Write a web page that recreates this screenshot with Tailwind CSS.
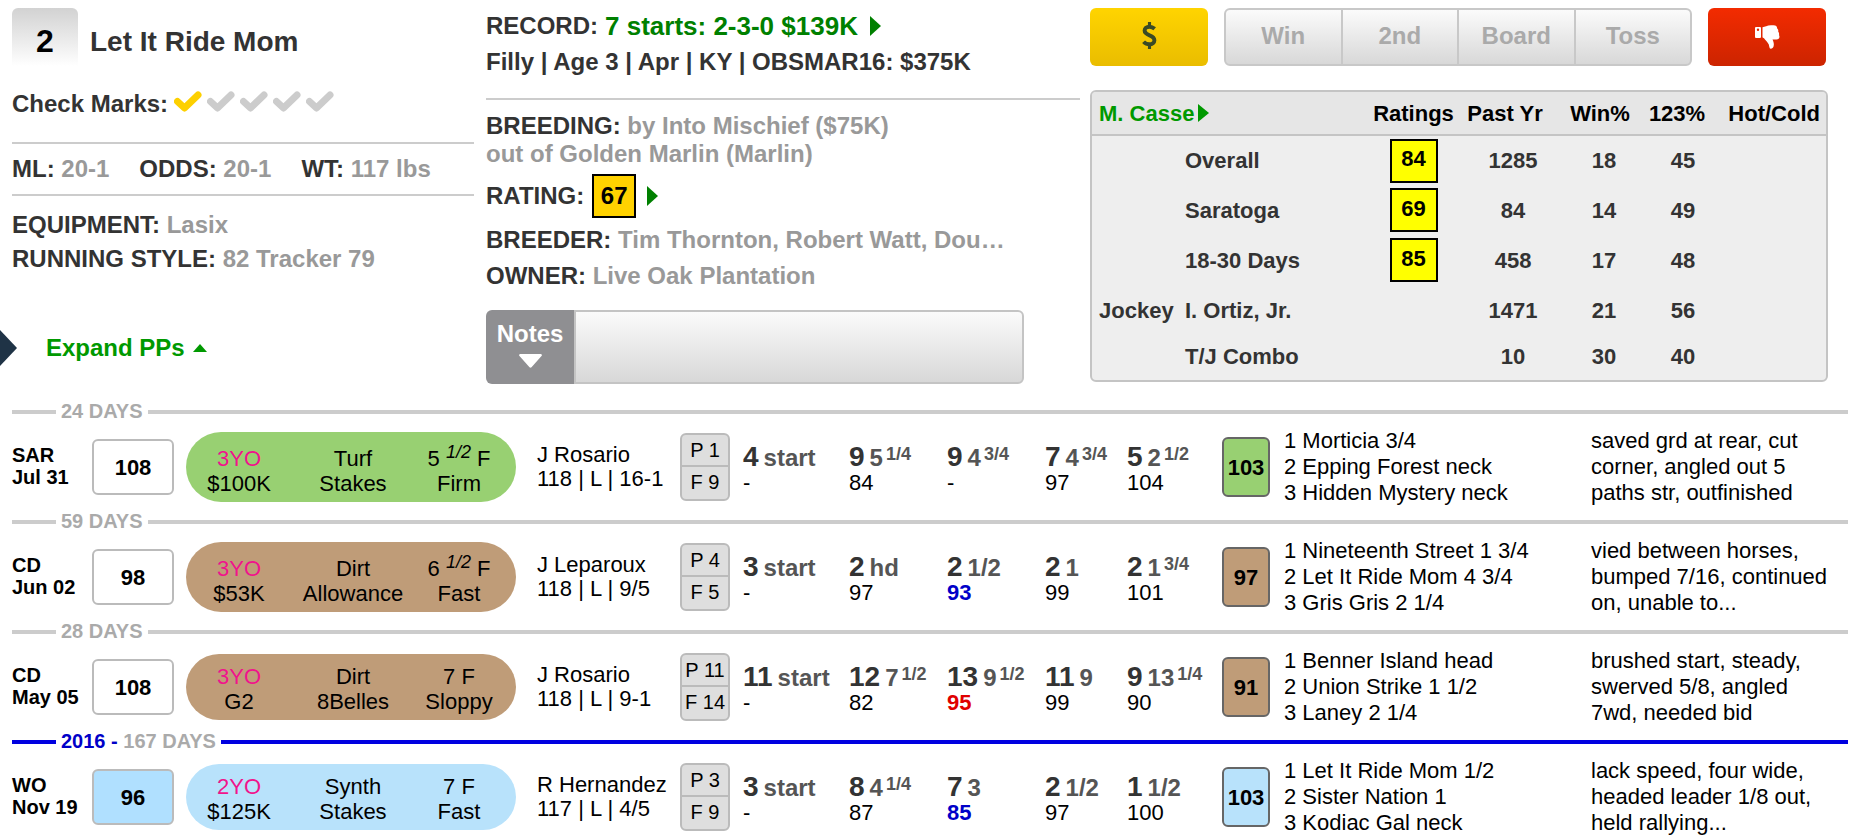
<!DOCTYPE html>
<html lang="en">
<head>
    <meta charset="UTF-8">
    <meta name="viewport" content="width=device-width, initial-scale=1.0">
    <title>Let It Ride Mom - Past Performances</title>
    <script src="https://cdn.jsdelivr.net/npm/@tailwindcss/browser@4"></script>
</head>
<body class="bg-white font-['Liberation_Sans',Arial,sans-serif] text-black">
    <main class="pr-2 pl-3">
        <div class="flex h-[400px] gap-3 pt-2 pr-1">

            <!-- Horse info -->
            <section class="min-w-0 flex-[462] text-2xl leading-7 font-bold text-[#333]">
                <div class="flex h-[58px] items-center gap-3">
                    <span class="flex h-full w-[66px] items-center justify-center rounded-t-md bg-linear-to-b from-[#d2d2d2] to-white pt-2 text-[32px] text-black">2</span>
                    <h1 class="pt-[10px] text-[28px]">Let It Ride Mom</h1>
                </div>
                <div class="mt-6 flex items-center gap-[6px] border-b-2 border-[#ccc] pb-6">
                    <span class="whitespace-nowrap">Check Marks:</span>
                    <div id="checks" class="flex gap-[5px] pb-1"></div>
                </div>
                <div class="flex h-[52px] items-center gap-[30px] border-b-2 border-[#ccc] whitespace-nowrap">
                    <span>ML: <span class="text-[#999]">20-1</span></span>
                    <span>ODDS: <span class="text-[#999]">20-1</span></span>
                    <span>WT: <span class="text-[#999]">117 lbs</span></span>
                </div>
                <div class="mt-3 leading-[34px]">
                    <p>EQUIPMENT: <span class="text-[#999]">Lasix</span></p>
                    <p>RUNNING STYLE: <span class="text-[#999]">82 Tracker 79</span></p>
                </div>
                <div class="relative mt-[58px] pl-[34px]">
                    <svg class="absolute -top-1 -left-3" width="17" height="36" viewBox="0 0 17 36"><path d="M0 0 L17 18 L0 36 Z" fill="#1f3346"/></svg>
                    <a href="#races" class="flex items-center gap-2 text-[#090]">Expand PPs
                        <svg width="14" height="8" viewBox="0 0 14 8"><path d="M0 8 L7 0 L14 8 Z" fill="currentColor"/></svg>
                    </a>
                </div>
            </section>

            <!-- Breeding and connections -->
            <section class="min-w-0 flex-[594] text-2xl leading-7 font-bold text-[#333]">
                <div class="h-[92px] border-b-2 border-[#ccc] leading-9 whitespace-nowrap">
                    <p class="flex items-center">RECORD:
                        <a href="#record" class="ml-[7px] flex items-center gap-3 text-[26px] text-[green]">7 starts: 2-3-0 $139K
                            <svg width="11" height="20" viewBox="0 0 11 20"><path d="M0 0 L11 10 L0 20 Z" fill="currentColor"/></svg>
                        </a>
                    </p>
                    <p>Filly | Age 3 | Apr | KY | OBSMAR16: $375K</p>
                </div>
                <p class="mt-3">BREEDING: <span class="text-[#999]">by Into Mischief ($75K)<br>out of Golden Marlin (Marlin)</span></p>
                <div class="mt-[6px] flex h-11 items-center">RATING:
                    <span class="ml-2 flex h-11 w-11 items-center justify-center border-2 border-black bg-[#ffd200] text-black">67</span>
                    <a href="#rating" aria-label="Rating details" class="ml-[11px] text-[green]">
                        <svg width="11" height="20" viewBox="0 0 11 20"><path d="M0 0 L11 10 L0 20 Z" fill="currentColor"/></svg>
                    </a>
                </div>
                <div class="mt-1 leading-9">
                    <p class="truncate">BREEDER: <span class="text-[#999]">Tim Thornton, Robert Watt, Dou…</span></p>
                    <p>OWNER: <span class="text-[#999]">Live Oak Plantation</span></p>
                </div>
                <div class="mt-4 flex h-[74px] w-[538px] max-w-full">
                    <button class="flex w-[88px] flex-col items-center rounded-l-md bg-[#8f8f92] pt-[10px] text-white">
                        Notes
                        <svg class="mt-[6px]" width="23" height="14" viewBox="0 0 23 14"><path d="M1 0 H22 Q23.500 1 22.500 2 L12.500 13.300 Q11.500 14 10.500 13.300 L.5 2 Q-.5 1 1 0 Z" fill="currentColor"/></svg>
                    </button>
                    <textarea aria-label="Notes" class="min-w-0 flex-1 resize-none rounded-r-md border-2 border-[#c4c4c4] bg-linear-to-b from-[#fbfbfb] to-[#d8d8d8]"></textarea>
                </div>
            </section>

            <!-- Bet buttons and trainer / jockey stats -->
            <section class="-ml-[2px] min-w-0 flex-[738] pr-4 text-[22px] font-bold text-[#333]">
                <div class="flex h-[58px] gap-4 pr-[2px]">
                    <button aria-label="Bet" class="flex w-[118px] items-center justify-center rounded-md bg-linear-to-b from-[#ffd400] to-[#eabd00] pb-1">
                        <svg width="15" height="27" viewBox="0 0 14 26" fill="none" stroke="#3a4a26" stroke-width="3.800"><path d="M12 6.500 C10 4.800 8.500 4.500 7 4.500 C4 4.500 2.300 6 2.300 8.300 C2.300 11 4.500 11.900 7 12.800 C9.800 13.800 11.700 15 11.700 17.600 C11.700 20 9.700 21.500 7 21.500 C4.600 21.500 2.800 20.600 1.300 19"/><path d="M7 0 V4.500 M7 21.500 V26" stroke-width="3"/></svg>
                    </button>
                    <div class="flex flex-1 divide-x-2 divide-[#c8c8c8] rounded-md border-2 border-[#c8c8c8] bg-linear-to-b from-[#fbfbfb] to-[#d8d8d8] text-2xl text-[#aaa]">
                        <button class="flex-1 pb-[2px]">Win</button>
                        <button class="flex-1 pb-[2px]">2nd</button>
                        <button class="flex-1 pb-[2px]">Board</button>
                        <button class="flex-1 pb-[2px]">Toss</button>
                    </div>
                    <button aria-label="Toss horse" class="flex w-[118px] items-center justify-center rounded-md bg-linear-to-b from-[#f32b00] to-[#cc2400]">
                        <svg width="25" height="24" viewBox="0 0 25 24" fill="#fff"><path fill-rule="evenodd" d="M1 2 H5 Q6 2 6 3 V12 Q6 13 5 13 H1 Q0 13 0 12 V3 Q0 2 1 2 Z M3 3.500 A1.200 1.200 0 1 0 3 5.900 A1.200 1.200 0 1 0 3 3.500 Z"/><path d="M7.500 2.200 C10 2 12 .3 16 .3 H18.500 C21 .3 22 1.500 22.200 3.500 C23.200 4.300 23.500 5.500 23.200 6.800 C24.200 7.800 24.300 9 24 10 C25.200 12.500 24 14.500 21.500 14.500 H17.500 C18.200 16 19 18 18.800 20 C18.600 22.500 17.500 23.800 15.500 23.800 C14.300 23.500 14.200 21 13.800 19.500 C13 17.500 10.300 14.800 9 13.200 C8.500 12.800 7.500 12.800 7.500 12 Z"/></svg>
                    </button>
                </div>
                <div class="mt-6 overflow-hidden rounded-md border-2 border-[#c4c4c4] bg-[#eee] pb-[3px]">
                    <table class="w-full table-fixed text-center whitespace-nowrap">
                        <colgroup>
                            <col class="w-[93px]"><col class="w-[180px]"><col class="w-[97px]"><col class="w-[102px]"><col class="w-[80px]"><col class="w-[78px]"><col>
                        </colgroup>
                        <thead>
                            <tr class="h-[43px] border-b-2 border-[#c4c4c4] bg-[#e6e6e6] text-black">
                                <th colspan="2" class="pl-[7px] text-left">
                                    <a href="#trainer" class="flex items-center gap-1 text-[#090]">M. Casse
                                        <svg width="11" height="18" viewBox="0 0 11 18"><path d="M0 0 L11 9 L0 18 Z" fill="currentColor"/></svg>
                                    </a>
                                </th>
                                <th>Ratings</th>
                                <th class="pr-4">Past Yr</th>
                                <th class="pr-2">Win%</th>
                                <th class="pr-3">123%</th>
                                <th class="pr-[6px] text-right">Hot/Cold</th>
                            </tr>
                        </thead>
                        <tbody id="stats"></tbody>
                    </table>
                </div>
            </section>
        </div>

        <!-- Past performances -->
        <table id="races" class="w-full table-fixed text-left text-[22px] whitespace-nowrap">
            <colgroup>
                <col class="w-[80px]"><col class="w-[94px]"><col class="w-[351px]"><col class="w-[143px]"><col class="w-[63px]"><col class="w-[106px]"><col class="w-[98px]"><col class="w-[98px]"><col class="w-[82px]"><col class="w-[95px]"><col class="w-[62px]"><col class="w-[307px]"><col>
            </colgroup>
            <tbody id="raceRows"></tbody>
        </table>
    </main>

    <script>
        const connections = [
            ['', 'Overall', 84, 1285, 18, 45],
            ['', 'Saratoga', 69, 84, 14, 49],
            ['', '18-30 Days', 85, 458, 17, 48],
            ['Jockey', 'I. Ortiz, Jr.', null, 1471, 21, 56],
            ['', 'T/J Combo', null, 10, 30, 40]
        ];

        const surfaces = {
            turf: 'bg-[#98d072]',
            dirt: 'bg-[#bf9c78]',
            synth: 'bg-[#b8e2fb]'
        };

        // calls: [position, margin, fraction, speed, speed colour]
        const races = [
            {
                days: '24 DAYS', track: 'SAR', date: 'Jul 31', speed: 108, surface: 'turf',
                age: '3YO', purse: '$100K', course: 'Turf', type: 'Stakes', distance: '5', half: true, going: 'Firm',
                jockey: 'J Rosario', line: '118 | L | 16-1', post: 'P 1', field: 'F 9',
                calls: [[4, 'start', '', '-'], [9, '5', '1/4', 84], [9, '4', '3/4', '-'], [7, '4', '3/4', 97], [5, '2', '1/2', 104]],
                figure: 103,
                finish: ['1 Morticia 3/4', '2 Epping Forest neck', '3 Hidden Mystery neck'],
                comment: 'saved grd at rear, cut corner, angled out 5 paths str, outfinished'
            },
            {
                days: '59 DAYS', track: 'CD', date: 'Jun 02', speed: 98, surface: 'dirt',
                age: '3YO', purse: '$53K', course: 'Dirt', type: 'Allowance', distance: '6', half: true, going: 'Fast',
                jockey: 'J Leparoux', line: '118 | L | 9/5', post: 'P 4', field: 'F 5',
                calls: [[3, 'start', '', '-'], [2, 'hd', '', 97], [2, '1/2', '', 93, 'blue'], [2, '1', '', 99], [2, '1', '3/4', 101]],
                figure: 97,
                finish: ['1 Nineteenth Street 1 3/4', '2 Let It Ride Mom 4 3/4', '3 Gris Gris 2 1/4'],
                comment: 'vied between horses, bumped 7/16, continued on, unable to...'
            },
            {
                days: '28 DAYS', track: 'CD', date: 'May 05', speed: 108, surface: 'dirt',
                age: '3YO', purse: 'G2', course: 'Dirt', type: '8Belles', distance: '7', half: false, going: 'Sloppy',
                jockey: 'J Rosario', line: '118 | L | 9-1', post: 'P 11', field: 'F 14',
                calls: [[11, 'start', '', '-'], [12, '7', '1/2', 82], [13, '9', '1/2', 95, 'red'], [11, '9', '', 99], [9, '13', '1/4', 90]],
                figure: 91,
                finish: ['1 Benner Island head', '2 Union Strike 1 1/2', '3 Laney 2 1/4'],
                comment: 'brushed start, steady, swerved 5/8, angled 7wd, needed bid'
            },
            {
                year: '2016 -', days: '167 DAYS', track: 'WO', date: 'Nov 19', speed: 96, highlight: true, surface: 'synth',
                age: '2YO', purse: '$125K', course: 'Synth', type: 'Stakes', distance: '7', half: false, going: 'Fast',
                jockey: 'R Hernandez', line: '117 | L | 4/5', post: 'P 3', field: 'F 9',
                calls: [[3, 'start', '', '-'], [8, '4', '1/4', 87], [7, '3', '', 85, 'blue'], [2, '1/2', '', 97], [1, '1/2', '', 100]],
                figure: 103,
                finish: ['1 Let It Ride Mom 1/2', '2 Sister Nation 1', '3 Kodiac Gal neck'],
                comment: 'lack speed, four wide, headed leader 1/8 out, held rallying...'
            }
        ];

        function renderChecks() {
            document.getElementById('checks').innerHTML = [1, 0, 0, 0, 0].map(on => `
                <svg width="28" height="22" viewBox="0 0 28 22" class="${on ? 'text-[#fdd000]' : 'text-[#ccc]'}"><path d="M3.500 10.500 L10.500 17 L24 4" fill="none" stroke="currentColor" stroke-width="7" stroke-linecap="round" stroke-linejoin="round"/></svg>
            `).join('');
        }

        function renderStats() {
            document.getElementById('stats').innerHTML = connections.map(([role, name, rating, starts, win, itm]) => `
                <tr class="h-[50px] last:h-[42px]">
                    <td class="pl-[7px] text-left">${role}</td>
                    <td class="text-left">${name}</td>
                    <td>${rating ? `<span class="mx-auto flex h-11 w-12 items-center justify-center border-2 border-black bg-[#ff0] pb-1 text-black">${rating}</span>` : ''}</td>
                    <td>${starts}</td>
                    <td>${win}</td>
                    <td>${itm}</td>
                    <td></td>
                </tr>
            `).join('');
        }

        function callCell([position, margin, fraction, speed, color]) {
            const speedClass = { blue: 'font-bold text-[#0000c8]', red: 'font-bold text-[#e00000]' }[color] || '';
            return `
                <td class="pt-[2px]">
                    <div class="flex items-baseline leading-7 font-bold text-[#555]">
                        <span class="mr-[5px] text-[28px] leading-7 text-[#333]">${position}</span>
                        <span class="text-2xl leading-7">${margin}</span>
                        ${fraction ? `<sup class="-top-[6px] ml-[3px] text-lg leading-none">${fraction}</sup>` : ''}
                    </div>
                    <div class="leading-[22px] ${speedClass}">${speed}</div>
                </td>`;
        }

        function renderRaces() {
            document.getElementById('raceRows').innerHTML = races.map(race => {
                const line = race.year ? 'bg-[#0000e0]' : 'bg-[#ccc]';
                return `
                <tr class="h-6">
                    <td colspan="13">
                        <div class="flex items-center gap-[5px] text-xl leading-6 font-bold text-[#aaa]">
                            <span class="h-1 w-11 ${line}"></span>
                            <span class="pb-[2px] leading-[22px]">${race.year ? `<span class="text-[#0000c8]">${race.year}</span> ` : ''}${race.days}</span>
                            <span class="h-1 flex-1 ${line}"></span>
                        </div>
                    </td>
                </tr>
                <tr class="h-[86px]">
                    <td class="pb-[2px] text-xl leading-[22px] font-bold">${race.track}<br>${race.date}</td>
                    <td>
                        <div class="flex h-14 w-[82px] items-center justify-center rounded-md border-2 border-[#bbb] font-bold ${race.highlight ? 'bg-[#b0e0ff]' : 'bg-white'}">${race.speed}</div>
                    </td>
                    <td>
                        <div class="grid w-[330px] grid-cols-[106px_122px_90px] rounded-[35px] pb-[6px] text-center leading-[25px] ${race.half ? 'pt-[14px]' : 'pt-[10px]'} ${surfaces[race.surface]}">
                            <div><span class="text-[#f0148c]">${race.age}</span><br>${race.purse}</div>
                            <div>${race.course}<br>${race.type}</div>
                            <div>${race.distance} ${race.half ? '<sup class="-top-2 text-lg leading-none italic">1/2</sup> ' : ''}F<br>${race.going}</div>
                        </div>
                    </td>
                    <td class="leading-6">${race.jockey}<br>${race.line}</td>
                    <td>
                        <div class="w-[50px] divide-y-2 divide-[#bbb] rounded-md border-2 border-[#bbb] bg-[#dedede] text-center text-xl">
                            <div class="h-8 leading-[30px]">${race.post}</div>
                            <div class="h-8 leading-[30px]">${race.field}</div>
                        </div>
                    </td>
                    ${race.calls.map(callCell).join('')}
                    <td>
                        <div class="flex h-[60px] w-12 items-center justify-center rounded-md border-2 border-[#666] font-bold ${surfaces[race.surface]}">${race.figure}</div>
                    </td>
                    <td class="leading-[26px]">${race.finish.join('<br>')}</td>
                    <td><p class="w-[240px] leading-[26px] whitespace-normal">${race.comment}</p></td>
                </tr>`;
            }).join('');
        }

        renderChecks();
        renderStats();
        renderRaces();
    </script>
</body>
</html>
